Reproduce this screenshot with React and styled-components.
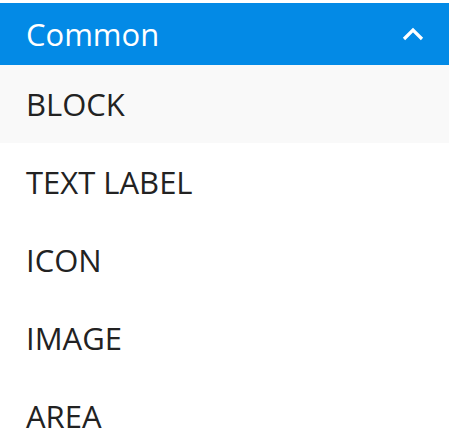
import styled, { createGlobalStyle } from 'styled-components';

const GlobalStyle = createGlobalStyle`
  body {
    margin: 0;
    background: #fff;
    font-family: "Open Sans", "Liberation Sans", sans-serif;
  }
`;

const Wrapper = styled.div`
  padding-top: 3px;
  width: 449px;
`;

const Header = styled.div`
  display: flex;
  align-items: center;
  justify-content: space-between;
  height: 62px;
  padding: 0 24px 0 26px;
  background: #038ae6;
  color: #fff;
`;

const HeaderTitle = styled.span`
  font-size: 31px;
  line-height: 1;
`;

const Chevron = styled.svg`
  width: 24px;
  height: 16px;
`;

const MenuList = styled.ul`
  list-style: none;
  margin: 0;
  padding: 0;
`;

const MenuItem = styled.li`
  display: flex;
  align-items: center;
  height: 78px;
  padding-left: 26px;
  font-size: 31px;
  color: #222;
  background: ${(p) => (p.$active ? '#f9f9f9' : '#fff')};
`;

const items = ['BLOCK', 'TEXT LABEL', 'ICON', 'IMAGE', 'AREA'];

function App() {
  return (
    <Wrapper>
      <GlobalStyle />
      <Header>
        <HeaderTitle>Common</HeaderTitle>
        <Chevron viewBox="0 0 24 16">
          <path d="M3 13 L12 4 L21 13" fill="none" stroke="#fff" strokeWidth="3.2" />
        </Chevron>
      </Header>
      <MenuList>
        {items.map((item, i) => (
          <MenuItem key={item} $active={i === 0}>
            {item}
          </MenuItem>
        ))}
      </MenuList>
    </Wrapper>
  );
}

export default App;
